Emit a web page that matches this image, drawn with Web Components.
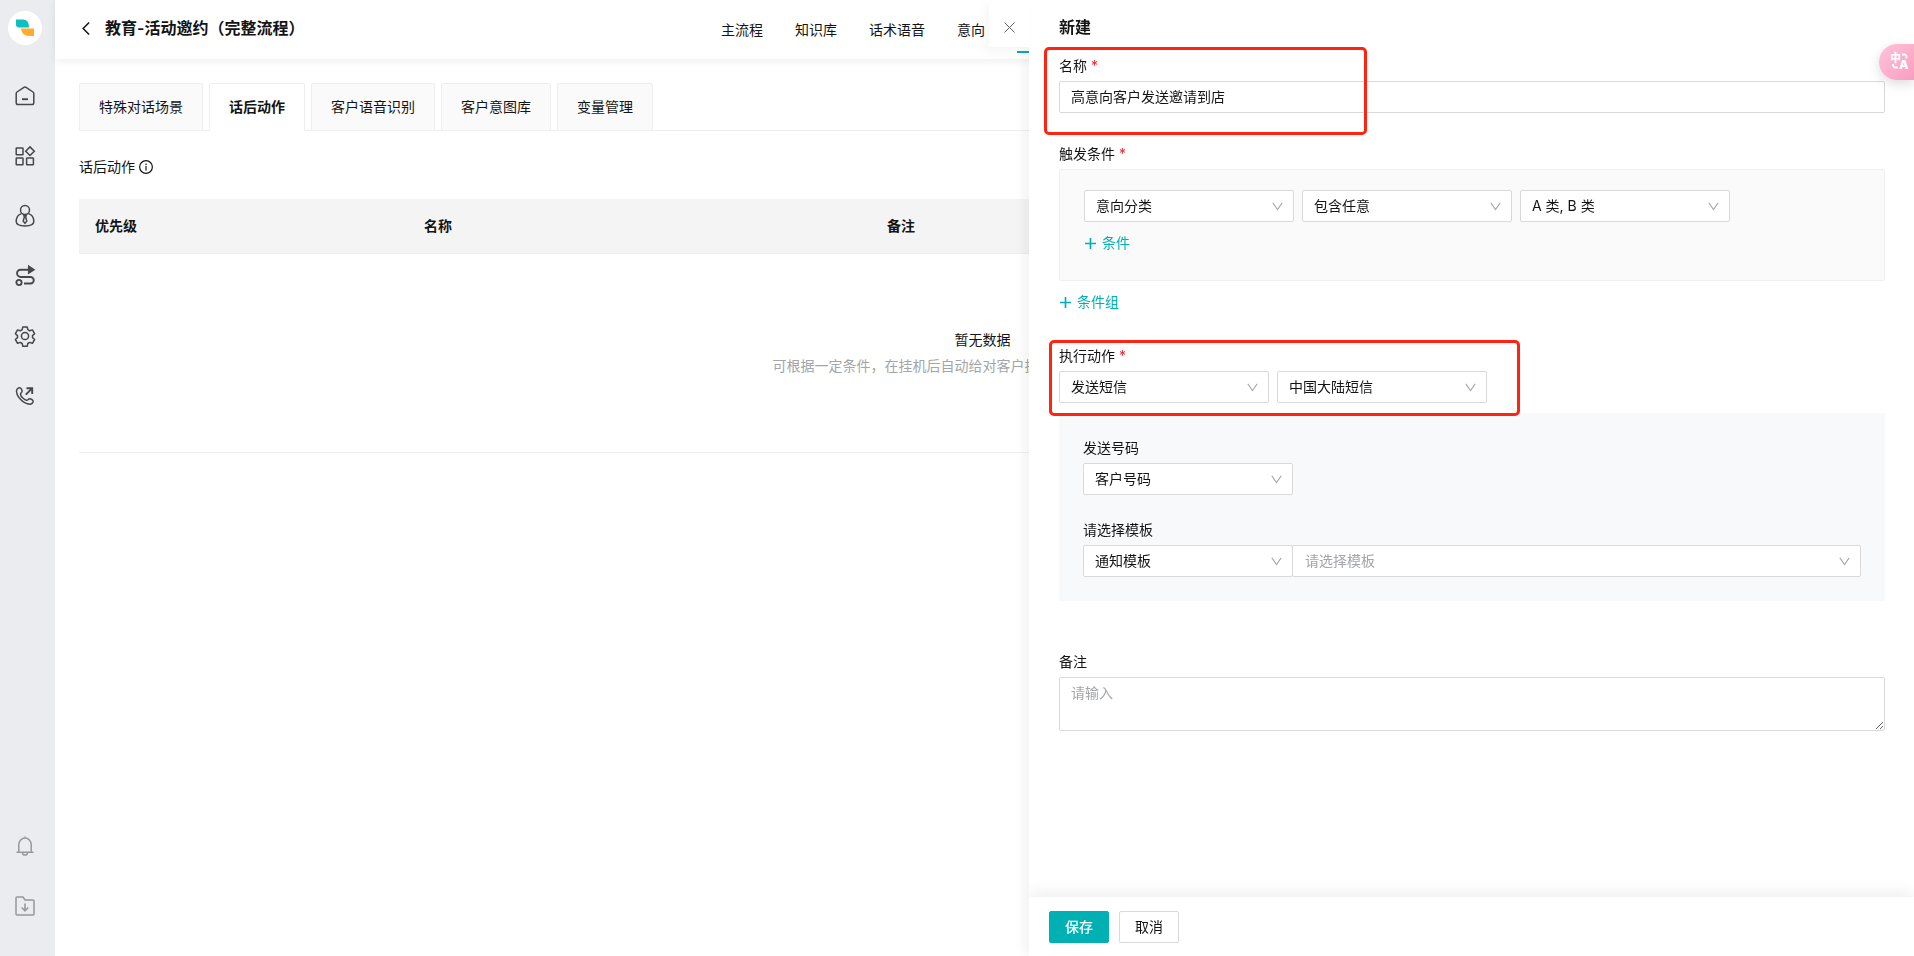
<!DOCTYPE html>
<html lang="zh-CN">
<head>
<meta charset="utf-8">
<title>教育-活动邀约（完整流程）</title>
<style>
  body {
    margin: 0;
    font: 14px/22px Inter, "Noto Sans CJK SC", sans-serif;
    color: #141414;
    background: #fff;
    --teal: #00b0b2;
    --line: #d9d9d9;
    --soft-line: #eeeeee;
    --muted: #a3a5a8;
  }
</style>
</head>
<body>
<call-app></call-app>

<script>
const define = (name, html, setup) => {
  const template = document.createElement('template');
  template.innerHTML = html;
  customElements.define(name, class extends HTMLElement {
    constructor() {
      super();
      this.attachShadow({ mode: 'open' }).append(template.content.cloneNode(true));
    }
    connectedCallback() {
      if (setup && !this.ready) { this.ready = true; setup(this, this.shadowRoot); }
    }
  });
};

/* Line icons on a 20 × 20 grid */
const ICONS = {
  home: '<path d="M1.2 7.6Q1.2 6.6 2 6L8.9 1.3Q10 .7 11.1 1.3L18 6Q18.8 6.6 18.8 7.6V16.8Q18.8 18.6 17 18.6H3Q1.2 18.6 1.2 16.8Z"/><path d="M7 13.2h6" stroke-width="1.9"/>',
  apps: '<rect x="1.2" y="2" width="6.8" height="6.8" rx=".6"/><rect x="1.2" y="12" width="6.8" height="6.8" rx=".6"/><rect x="11.6" y="12" width="6.8" height="6.8" rx=".6"/><path d="M15 .9l4.3 4.3L15 9.500l-4.300-4.300z"/>',
  agent: '<circle cx="10" cy="4" r="4.500"/><path d="M6.500 7.600C3.200 8.600 1.200 11.800 1.200 15.600Q1.200 20 10 20T18.800 15.600C18.800 11.800 16.800 8.600 13.500 7.600"/><path d="M8.900 9.500h2.200l-.4 1.800 1.100 3.800L10 17.300l-1.800-2.200 1.100-3.800z"/>',
  flow: '<circle cx="4" cy="16.500" r="2.600" stroke-width="1.900"/><path d="M9 17.500h6.500a3 3 0 0 0 0-6.500H5.700a3.300 3.300 0 0 1 0-7.300H13" stroke-width="1.900"/><path d="M13.700.2v7L19 3.700z" fill="currentColor"/>',
  gear: '<circle cx="10" cy="10" r="3.600"/><path d="M7.800.9h4.400l.6 2.800 1.900 1.100 2.700-.9 2.200 3.800-2.100 1.900v2l2.100 1.900-2.200 3.800-2.700-.9-1.900 1.100-.6 2.800H7.800l-.6-2.800-1.900-1.100-2.700.9-2.200-3.800 2.100-1.900v-2L.4 7.700l2.200-3.800 2.700.9 1.900-1.100z" stroke-linejoin="round"/>',
  phone: '<path d="M1.500 5.200C1.300 3.300 3.300 1.600 4.600 1.700 6 1.900 7.300 4.300 7.100 5.500 6.900 6.600 5.400 7.100 5.500 8.300 5.800 10.600 9.300 14 11.700 14.300 12.900 14.400 13.300 13 14.400 12.800 15.700 12.600 18.200 14 18.200 15.300 18.200 16.700 16.500 18.300 14.700 18.200 8.500 17.800 1.900 11.300 1.500 5.200Z"/><path d="M10.800 8.600l6-6M11.500 2.300h5.700v5.700" stroke-width="1.900"/>',
  bell: '<path d="M1.500 16.200h17M3.800 16V8.800a6.200 6.700 0 0 1 12.400 0V16M10 .4v1.500M7.500 16.500a2.500 2.600 0 0 0 5 0"/>',
  inbox: '<path d="M1 2Q1 1 2 1H8l2 2.900h8q1 0 1 1V18q0 1-1 1H2q-1 0-1-1Z"/><path d="M10 7.500v7M6.700 11.500l3.300 3.300 3.300-3.300" stroke-width="1.600"/>',
  back: '<path d="M13.500 2L5.500 10l8 8" stroke-width="2"/>',
  close: '<path d="M1 1l18 18M19 1L1 19" stroke-width="1.800"/>',
  info: '<circle cx="10" cy="10" r="9.100" stroke-width="1.700"/><path d="M10 8.500V15M10 5v2" stroke-width="1.700"/>',
  plus: '<path d="M10 0v20M0 10h20" stroke-width="3"/>',
  chevron: '<path d="M1.500 3.500L10 15.500l8.500-12" stroke-width="1.900"/>'
};

define('line-icon', `
  <style>
    :host { display: inline-block; width: 20px; height: 20px; flex: none; }
    svg { display: block; width: 100%; height: 100%; overflow: visible; fill: none; stroke: currentColor; stroke-width: 1.500; }
  </style>
  <svg viewBox="0 0 20 20" aria-hidden="true"></svg>
`, (el, root) => { root.querySelector('svg').innerHTML = ICONS[el.getAttribute('name')]; });

define('side-item', `
  <style>
    :host { display: block; }
    a { display: flex; align-items: center; justify-content: center; height: 60px; color: inherit; }
  </style>
  <a href="#"><line-icon></line-icon></a>
`, (el, root) => {
  root.querySelector('a').setAttribute('aria-label', el.getAttribute('label'));
  const icon = document.createElement('line-icon');
  icon.setAttribute('name', el.getAttribute('icon'));
  icon.style.cssText = 'width:20px;height:20px';
  root.querySelector('line-icon').replaceWith(icon);
});

define('side-bar', `
  <style>
    :host { display: flex; flex-direction: column; box-sizing: border-box; width: 55px; flex: none; padding: 11px 5px 20px 0; background: #ebecf0; color: #46474a; }
    .logo { display: block; width: 34px; height: 34px; margin: 0 auto 21px; border-radius: 50%; background: #fff; }
    .logo svg { display: block; }
    .low { margin-top: auto; color: #96989c; }
  </style>
  <a class="logo" href="#" aria-label="首页">
    <svg width="34" height="34" viewBox="0 0 34 34" aria-hidden="true">
      <path d="M8 8.500H15Q21 8.500 21 16.500H11Q8 16.500 8 13.500Z" fill="#0cbfc1"/>
      <path d="M13 17.500H26V25H21Q14 25 13 17.500Z" fill="#ffab2d"/>
    </svg>
  </a>
  <nav aria-label="主导航">
    <side-item icon="home" label="工作台"></side-item>
    <side-item icon="apps" label="应用"></side-item>
    <side-item icon="agent" label="坐席"></side-item>
    <side-item icon="flow" label="流程"></side-item>
    <side-item icon="gear" label="设置"></side-item>
    <side-item icon="phone" label="外呼"></side-item>
  </nav>
  <div class="low">
    <side-item icon="bell" label="通知"></side-item>
    <side-item icon="inbox" label="下载"></side-item>
  </div>
`);

define('page-header', `
  <style>
    :host { display: flex; box-sizing: border-box; height: 59px; padding-left: 24px; box-shadow: 0 2px 8px rgba(0,0,0,.07); }
    .title { display: flex; align-items: center; gap: 11px; width: 626px; flex: none; height: 56px; }
    h1 { margin: 0; font-size: 16px; line-height: 24px; font-weight: 600; }
    button { display: flex; padding: 0; border: 0; background: none; color: inherit; }
    line-icon { width: 15px; height: 15px; }
    nav { display: flex; height: 53px; }
    a { display: block; box-sizing: border-box; height: 53px; padding-top: 19px; margin: 0 16px; color: inherit; text-decoration: none; white-space: nowrap; }
    a.on { width: 56px; border-bottom: 2px solid var(--teal); }
  </style>
  <div class="title">
    <button type="button" aria-label="返回"><line-icon name="back"></line-icon></button>
    <h1>教育-活动邀约（完整流程）</h1>
  </div>
  <nav aria-label="流程导航">
    <a href="#">主流程</a><a href="#">知识库</a><a href="#">话术语音</a><a href="#">意向</a><a class="on" href="#" aria-label="高级配置" aria-current="page"></a>
  </nav>
`);

define('tab-item', `
  <style>
    :host { display: block; margin-bottom: -1px; }
    button { display: block; box-sizing: border-box; height: 48px; padding: 0 19px; border: 1px solid var(--soft-line); border-radius: 2px 2px 0 0; background: #fafafa; color: inherit; font: inherit; }
    :host([selected]) button { background: #fff; border-bottom-color: #fff; font-weight: 700; }
  </style>
  <button type="button"><slot></slot></button>
`);

define('tab-strip', `
  <style>:host { display: flex; gap: 6px; border-bottom: 1px solid var(--soft-line); }</style>
  <slot></slot>
`);

define('action-table', `
  <style>
    :host { display: block; }
    table { width: 100%; table-layout: fixed; border-collapse: separate; border-spacing: 0; }
    th { box-sizing: border-box; height: 55px; padding: 0 16px; text-align: left; font-weight: 600; background: #f4f4f4; border-bottom: 1px solid var(--soft-line); }
    th:nth-child(1) { width: 329px; }
    th:nth-child(2) { width: 463px; }
    td { box-sizing: border-box; padding: 75px 0; text-align: center; border-bottom: 1px solid var(--soft-line); }
    p { margin: 0; }
    p + p { margin-top: 4px; padding-right: 140px; color: var(--muted); }
  </style>
  <table>
    <thead><tr><th scope="col">优先级</th><th scope="col">名称</th><th scope="col">备注</th></tr></thead>
    <tbody><tr><td colspan="3"><p>暂无数据</p><p>可根据一定条件，在挂机后自动给对客户执行</p></td></tr></tbody>
  </table>
`);

define('main-view', `
  <style>
    :host { display: block; flex: 1; min-width: 0; }
    main { padding: 24px 28px 0 24px; }
    h2 { display: flex; align-items: center; gap: 4px; margin: 25px 0 21px; font-size: 14px; line-height: 22px; font-weight: 400; }
    h2 line-icon { width: 14px; height: 14px; }
  </style>
  <page-header></page-header>
  <main>
    <tab-strip>
      <tab-item>特殊对话场景</tab-item><tab-item selected>话后动作</tab-item><tab-item>客户语音识别</tab-item><tab-item>客户意图库</tab-item><tab-item>变量管理</tab-item>
    </tab-strip>
    <h2>话后动作 <line-icon name="info"></line-icon></h2>
    <action-table></action-table>
  </main>
`);

/* Form controls. Each one carries its own label. */
const FIELD_CSS = `
  :host { display: block; }
  label { display: block; margin-bottom: 4px; line-height: 22px; }
  label[hidden] { display: none; }
  i { margin-left: 4px; font-style: normal; color: #f5222d; }
  input, select, textarea { display: block; box-sizing: border-box; width: 100%; height: 32px; margin: 0; padding: 0 11px; border: 1px solid var(--line); border-radius: 2px; background: #fff; color: inherit; font: inherit; outline: 0; }
  input { padding-bottom: 2px; }
  ::placeholder { color: var(--muted); opacity: 1; }
`;
const labelUp = (el, root) => {
  const label = root.querySelector('label');
  const control = root.querySelector('#control');
  const text = el.getAttribute('label');
  if (text) {
    label.textContent = text;
    if (el.hasAttribute('required')) label.insertAdjacentHTML('beforeend', '<i>*</i>');
  } else {
    label.hidden = true;
    control.setAttribute('aria-label', el.getAttribute('name'));
  }
  return control;
};

define('text-field', `<style>${FIELD_CSS}</style><label for="control"></label><input id="control" type="text">`,
  (el, root) => { labelUp(el, root).value = el.getAttribute('value'); });

define('text-block', `<style>${FIELD_CSS} textarea { height: 54px; padding: 4px 11px; resize: vertical; }</style><label for="control"></label><textarea id="control"></textarea>`,
  (el, root) => { labelUp(el, root).placeholder = el.getAttribute('placeholder'); });

define('pick-list', `
  <style>${FIELD_CSS}
    :host { width: 210px; flex: none; }
    :host([grow]) { width: auto; flex: 1; margin-left: -1px; }
    :host([grow]) select { padding-left: 12px; color: var(--muted); }
    select { grid-area: 1 / 1 / 2 / 4; appearance: none; padding-right: 32px; }
    .box { display: grid; grid-template-columns: 1fr 11px 11px; align-items: center; }
    line-icon { grid-area: 1 / 2; width: 11px; height: 11px; color: #a6a6a6; pointer-events: none; }
  </style>
  <label for="control"></label>
  <div class="box"><select id="control"></select><line-icon name="chevron"></line-icon></div>
`, (el, root) => { labelUp(el, root).add(new Option(el.getAttribute('value'))); });

define('add-link', `
  <style>
    :host { display: block; color: var(--teal); }
    button { display: flex; align-items: center; gap: 6px; padding: 0 1px; border: 0; background: none; color: inherit; font: inherit; }
    line-icon { width: 11px; height: 11px; }
  </style>
  <button type="button"><line-icon name="plus"></line-icon><slot></slot></button>
`);

define('push-button', `
  <style>
    :host { display: block; }
    button { display: block; height: 32px; width: 60px; padding: 0; border: 1px solid var(--line); border-radius: 2px; background: #fff; color: inherit; font: inherit; }
    :host([primary]) button { border-color: var(--teal); background: var(--teal); color: #fff; font-weight: 500; }
  </style>
  <button type="button"><slot></slot></button>
`);

/* Red frame drawn over the content that it calls out */
define('red-frame', `
  <style>
    :host { display: block; position: relative; }
    :host::after { content: ""; position: absolute; z-index: 1; box-sizing: border-box; left: var(--x); top: var(--y); width: var(--w); height: var(--h); border: 3px solid #ff2310; border-radius: 5px; pointer-events: none; }
  </style>
  <slot></slot>
`);

define('action-drawer', `
  <style>
    :host { position: fixed; top: 0; right: 0; bottom: 0; width: 885px; display: flex; flex-direction: column; background: #fff; box-shadow: -4px 0 12px rgba(0,0,0,.06); }
    .close { position: absolute; right: 100%; top: 0; display: flex; align-items: center; justify-content: center; box-sizing: border-box; width: 40px; height: 47px; padding: 7px 0 0; border: 0; background: #fff; color: #5c5c5c; box-shadow: -4px 6px 10px rgba(0,0,0,.04); }
    .close line-icon { width: 11px; height: 11px; }
    form { flex: 1; min-height: 0; padding: 15px 29px 0 30px; }
    h2 { margin: 0 0 16px; font-size: 16px; line-height: 24px; font-weight: 600; }
    .name { --x: -15px; --y: -8px; --w: 323px; --h: 88px; margin-bottom: 30px; }
    .action { --x: -10px; --y: -5px; --w: 471px; --h: 76px; margin: 32px 0 10px; }
    .row { display: flex; align-items: flex-end; gap: 8px; }
    .row.joined { gap: 0; }
    .caption { margin-bottom: 4px; }
    .caption i { margin-left: 4px; font-style: normal; color: #f5222d; }
    .group { box-sizing: border-box; height: 112px; padding: 20px 24px; border: 1px solid #f0f0f0; border-radius: 2px; background: #fafafa; margin-bottom: 10px; }
    .group add-link { margin-top: 10px; }
    .sms { display: grid; gap: 24px; padding: 24px; background: #f8f9fb; margin-bottom: 50px; }
    footer { display: flex; gap: 10px; height: 45px; padding: 14px 20px 0; background: #fff; box-shadow: 0 -4px 16px rgba(0,0,0,.07); clip-path: inset(-20px 0 0 0); }
  </style>
  <button class="close" type="button" aria-label="关闭"><line-icon name="close"></line-icon></button>
  <form>
    <h2>新建</h2>
    <red-frame class="name"><text-field label="名称" required value="高意向客户发送邀请到店"></text-field></red-frame>
    <div role="group" aria-labelledby="when">
      <div class="caption" id="when">触发条件<i>*</i></div>
      <div class="group">
        <div class="row">
          <pick-list name="条件字段" value="意向分类"></pick-list>
          <pick-list name="条件关系" value="包含任意"></pick-list>
          <pick-list name="条件取值" value="A 类, B 类"></pick-list>
        </div>
        <add-link>条件</add-link>
      </div>
      <add-link>条件组</add-link>
    </div>
    <red-frame class="action">
      <div class="row">
        <pick-list label="执行动作" required value="发送短信"></pick-list>
        <pick-list name="短信类型" value="中国大陆短信"></pick-list>
      </div>
    </red-frame>
    <div class="sms">
      <pick-list label="发送号码" value="客户号码"></pick-list>
      <div class="row joined">
        <pick-list label="请选择模板" value="通知模板"></pick-list>
        <pick-list grow name="模板" value="请选择模板"></pick-list>
      </div>
    </div>
    <text-block label="备注" placeholder="请输入"></text-block>
  </form>
  <footer><push-button primary>保存</push-button><push-button>取消</push-button></footer>
`);

define('translate-tab', `
  <style>
    :host { position: fixed; top: 44px; right: 0; }
    button { display: flex; align-items: center; box-sizing: border-box; width: 35px; height: 36px; padding: 0 0 2px 12px; border: 0; border-radius: 18px 0 0 18px; background: linear-gradient(135deg, #ffc4d9, #f99dc0); box-shadow: 0 4px 12px rgba(0,0,0,.14); }
    svg { display: block; overflow: visible; }
    text { fill: #fff; font-family: Inter, "Noto Sans CJK SC", sans-serif; font-weight: 900; }
  </style>
  <button type="button" aria-label="翻译">
    <svg width="18" height="18" viewBox="0 0 18 18" aria-hidden="true">
      <text x="-1" y="10" font-size="11">中</text>
      <text x="8" y="17" font-size="12">A</text>
      <path d="M11 2.500h2a2.500 2.500 0 0 1 2.500 2.500v1.500M2 12v1a2.500 2.500 0 0 0 2.500 2.500h2.500" fill="none" stroke="#fff" stroke-width="1.800"/>
    </svg>
  </button>
`);

define('call-app', `
  <style>:host { display: flex; min-height: 100vh; overflow: hidden; }</style>
  <side-bar></side-bar>
  <main-view></main-view>
  <action-drawer></action-drawer>
  <translate-tab></translate-tab>
`);
</script>
</body>
</html>
